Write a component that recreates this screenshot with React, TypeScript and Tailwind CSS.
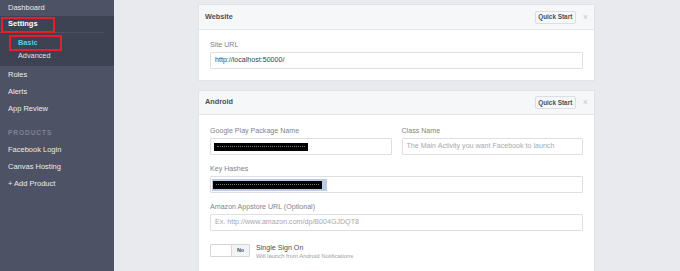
import React from 'react';

// --- Sidebar ---
const NavItem = ({ label, className = '' }: { label: string; className?: string }) => (
  <div className={`h-[17px] flex items-center pl-[8px] text-[7.5px] text-[#e9ebee] ${className}`}>{label}</div>
);

const Sidebar = () => (
  <div className="relative w-[114px] shrink-0 bg-[#4d5364] flex flex-col">
    <div className="h-[16px] flex items-center pl-[8px] text-[7.5px] text-[#e9ebee]">Dashboard</div>

    {/* Active section */}
    <div className="h-[50px] bg-[#3e4353] flex flex-col">
      <div className="h-[17px] flex items-center pl-[8px] text-[7.5px] font-bold text-white border-b border-[#4a5061] mr-[10px]">
        Settings
      </div>
      <div className="h-[16px] mt-[2px] flex items-center pl-[18px] text-[7.3px] font-bold text-[#4fcdf0]">Basic</div>
      <div className="h-[10px] flex items-center pl-[18px] text-[7.3px] text-[#dfe2e8]">Advanced</div>
    </div>

    <NavItem label="Roles" />
    <NavItem label="Alerts" />
    <NavItem label="App Review" />

    <div className="h-[10px] mt-[11px] mb-[3px] flex items-center pl-[8px] text-[6.6px] font-bold tracking-[0.9px] text-[#7d8495]">
      PRODUCTS
    </div>
    <NavItem label="Facebook Login" />
    <NavItem label="Canvas Hosting" />
    <NavItem label="+ Add Product" />

    {/* annotation boxes */}
    <div className="absolute left-[1px] top-[17px] w-[54px] h-[16px] border-2 border-[#e4202c]" />
    <div className="absolute left-[9px] top-[35px] w-[53px] h-[16px] border-2 border-[#e4202c]" />
  </div>
);

// --- Card parts ---
const CardHeader = ({ title, h }: { title: string; h: string }) => (
  <div className={`${h} bg-[#f6f7f9] border-b border-[#e5e6e9] flex items-center justify-between pl-[6px] pr-[6px]`}>
    <span className="text-[7.3px] font-bold text-[#4b4f56]">{title}</span>
    <div className="flex items-center gap-[7px]">
      <div className="h-[13px] w-[41px] bg-[#f6f7f9] border border-[#dcdee3] rounded-[2px] text-[6.4px] font-bold text-[#4b4f56] flex items-center justify-center">
        Quick Start
      </div>
      <span className="text-[9px] leading-none text-[#c4c7cd]">×</span>
    </div>
  </div>
);

const Label = ({ children }: { children: React.ReactNode }) => (
  <div className="h-[9px] mb-[2px] flex items-center text-[7.1px] text-[#80848b]">{children}</div>
);

const Input = ({ children }: { children?: React.ReactNode }) => (
  <div className="h-[17px] bg-white border border-[#dddfe2] rounded-[1px] flex items-center px-[4px] text-[7.1px] text-[#3b3f46] relative">
    {children}
  </div>
);

const Censor = ({ w }: { w: string }) => (
  <div className={`${w} h-[8px] bg-black flex items-center px-[3px]`}>
    <div className="w-full border-t border-dotted border-[#777]" />
  </div>
);

export default function App() {
  return (
    <div className="w-[680px] h-[271px] overflow-hidden flex font-['Liberation_Sans',Arial,sans-serif] bg-[#e9eaed]">
      <Sidebar />

      <div className="flex-1 pl-[84px] pt-[4px] flex flex-col gap-[9px]">
        {/* Website */}
        <div className="w-[397px] bg-white border border-[#e2e3e6]">
          <CardHeader title="Website" h="h-[25px]" />
          <div className="px-[11px] pt-[11px] pb-[11px]">
            <Label>Site URL</Label>
            <Input>http://localhost:50000/</Input>
          </div>
        </div>

        {/* Android */}
        <div className="w-[397px] bg-white border border-[#e2e3e6]">
          <CardHeader title="Android" h="h-[24px]" />
          <div className="px-[11px] pt-[12px] flex flex-col">
            <div className="grid grid-cols-2 gap-x-[10px]">
              <div>
                <Label>Google Play Package Name</Label>
                <Input>
                  <div className="-ml-[1px]"><Censor w="w-[94px]" /></div>
                </Input>
              </div>
              <div>
                <Label>Class Name</Label>
                <Input>
                  <span className="text-[#a6a9ae]">The Main Activity you want Facebook to launch</span>
                </Input>
              </div>
            </div>

            <div className="mt-[10px]">
              <Label>Key Hashes</Label>
              <Input>
                <div className="-ml-[3px] w-[115px] h-[12px] bg-[#b9cbe2] flex items-center pl-[1px]">
                  <Censor w="w-[109px]" />
                </div>
              </Input>
            </div>

            <div className="mt-[10px]">
              <Label>Amazon Appstore URL (Optional)</Label>
              <Input>
                <span className="text-[#a6a9ae]">Ex. http://www.amazon.com/dp/B004GJDQT8</span>
              </Input>
            </div>

            <div className="mt-[13px] flex items-start gap-[6px] pb-[20px]">
              <div className="w-[40px] h-[13px] border border-[#d3d6db] rounded-[1px] flex overflow-hidden">
                <div className="w-[21px] bg-white border-r border-[#d3d6db]" />
                <div className="flex-1 bg-[#f3f4f6] flex items-center justify-center text-[5.4px] font-bold text-[#4b4f56]">No</div>
              </div>
              <div className="flex flex-col">
                <span className="text-[7.1px] leading-[9px] text-[#4b4f56]">Single Sign On</span>
                <span className="text-[5.9px] leading-[7px] text-[#9a9ea5]">Will launch from Android Notifications</span>
              </div>
            </div>
          </div>
        </div>
      </div>
    </div>
  );
}
